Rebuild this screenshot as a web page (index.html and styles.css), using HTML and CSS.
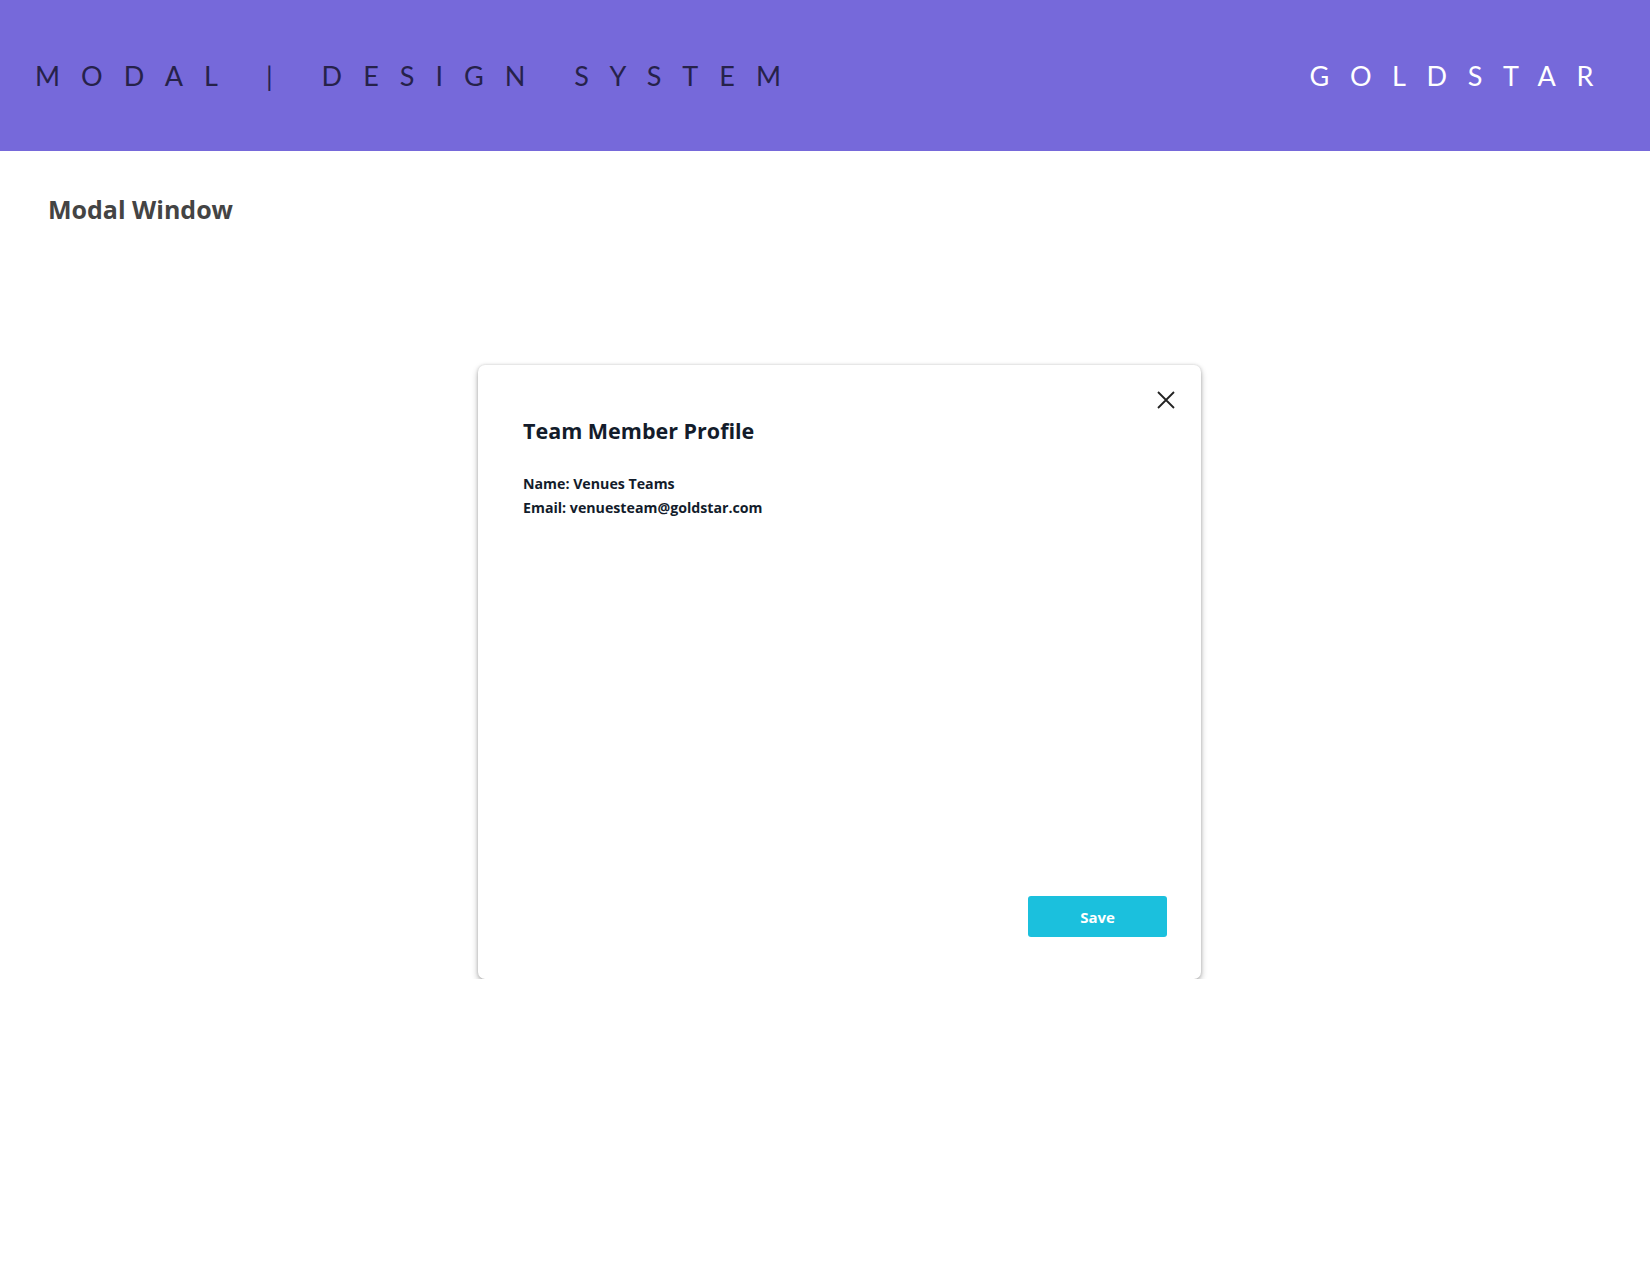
FILE: index.html
```html
<!DOCTYPE html>
<html>
<head>
<meta charset="utf-8">
<link rel="stylesheet" href="styles.css">
</head>
<body>
<header class="topbar">
  <div class="brand-left">MODAL | DESIGN SYSTEM</div>
  <div class="brand-right">GOLDSTAR</div>
</header>
<main class="page">
  <h1 class="page-title">Modal Window</h1>
  <section class="modal">
    <button class="close" aria-label="Close">
      <svg width="18" height="18" viewBox="0 0 18 18"><path d="M1 1L17 17M17 1L1 17" stroke="#222" stroke-width="1.8" fill="none"/></svg>
    </button>
    <h2 class="modal-title">Team Member Profile</h2>
    <div class="modal-body">
      <p>Name: Venues Teams</p>
      <p>Email: venuesteam@goldstar.com</p>
    </div>
    <div class="modal-footer">
      <button class="save">Save</button>
    </div>
  </section>
</main>
</body>
</html>
```
FILE: styles.css
```css
* { box-sizing: border-box; }
body {
  margin: 0;
  background: #fff;
  font-family: "Open Sans", "Noto Sans", sans-serif;
}
.topbar {
  height: 151px;
  background: #7669DA;
  display: flex;
  align-items: center;
  justify-content: space-between;
  padding: 0 36px 0 35px;
}
.brand-left, .brand-right {
  font-family: Lato, sans-serif;
  font-size: 27px;
  font-weight: 400;
  letter-spacing: 21px;
}
.brand-left { color: #26224a; }
.brand-right { color: #fff; letter-spacing: 20.6px; }
.page {
  padding: 0 48px;
}
.page-title {
  margin: 0;
  padding-top: 41px;
  font-size: 25px;
  line-height: 34px;
  font-weight: 700;
  color: #444;
}
.modal {
  position: relative;
  margin: 139px 0 0 430px;
  width: 723px;
  height: 614px;
  background: #fff;
  border-radius: 7px;
  box-shadow: 0 0 3px rgba(0,0,0,0.16), 0 3px 6px rgba(0,0,0,0.3);
  padding: 51px 34px 42px 45px;
  display: flex;
  flex-direction: column;
}
.close {
  position: absolute;
  top: 26px;
  right: 26px;
  background: none;
  border: 0;
  padding: 0;
  width: 18px;
  height: 18px;
  cursor: pointer;
}
.close svg { display: block; }
.modal-title {
  margin: 0;
  font-size: 21.5px;
  font-weight: 700;
  color: #131c2b;
}
.modal-body {
  margin-top: 27px;
  font-size: 14.2px;
  font-weight: 700;
  color: #131c2b;
  flex: 1;
}
.modal-body p { margin: 0; line-height: 24px; }
.modal-footer {
  display: flex;
  justify-content: flex-end;
}
.save {
  width: 139px;
  height: 41px;
  background: #1BC0DD;
  color: #fff;
  border: 0;
  border-radius: 3px;
  font-family: "Open Sans", sans-serif;
  font-size: 15px;
  font-weight: 700;
}
```
